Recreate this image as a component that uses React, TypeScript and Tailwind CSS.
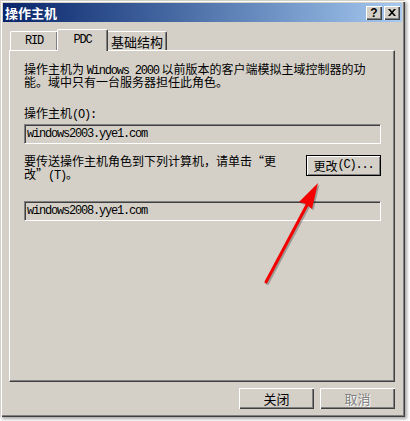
import type { ReactNode } from 'react';

const M = ({ children }: { children: ReactNode }) => (
  <span className="font-['Liberation_Mono',monospace] text-[12px] leading-[13px] tracking-[-1.2px]">{children}</span>
);

const Line = ({ children }: { children: ReactNode }) => (
  <div className="h-[13px] leading-[13px] whitespace-nowrap overflow-visible">{children}</div>
);

function Field({ value }: { value: string }) {
  return (
    <div className="flex items-center w-[357px] h-[20px] pl-[2px] border-t border-l border-[#808080] border-b-white border-r-white border-b border-r shadow-[inset_1px_1px_0_#404040]">
      <M>{value}</M>
    </div>
  );
}

export default function App() {
  return (
    <div className="relative w-[410px] h-[421px] bg-white overflow-hidden font-['Noto_Sans_CJK_SC',sans-serif] text-[12px] leading-[13px] text-black">
      <div className="flex flex-col w-[405px] h-[417px] bg-[#d4d0c8] p-[3px] shadow-[inset_1px_1px_0_#d4d0c8,inset_2px_2px_0_#fff,inset_-1px_-1px_0_#404040,inset_-2px_-2px_0_#808080,2px_2px_3px_rgba(0,0,0,0.35)]">
        {/* title bar */}
        <div className="flex items-center justify-between h-[19px] pl-[2px] pr-[2px] bg-gradient-to-r from-[#0a246a] to-[#a6caf0]">
          <span className="text-white font-bold text-[13px] leading-[19px]">操作主机</span>
          <div className="flex gap-[2px]">
            <div className="flex items-center justify-center w-[16px] h-[14px] bg-[#d4d0c8] shadow-[inset_1px_1px_0_#fff,inset_-1px_-1px_0_#404040,inset_-2px_-2px_0_#808080] font-['Liberation_Sans',sans-serif] font-bold text-[12px] leading-[12px]">
              ?
            </div>
            <div className="flex items-center justify-center w-[16px] h-[14px] bg-[#d4d0c8] shadow-[inset_1px_1px_0_#fff,inset_-1px_-1px_0_#404040,inset_-2px_-2px_0_#808080]">
              <svg width="8" height="7" viewBox="0 0 8 7">
                <path d="M0 0L2 0L4 2.3L6 0L8 0L5 3.5L8 7L6 7L4 4.7L2 7L0 7L3 3.5Z" fill="#000" />
              </svg>
            </div>
          </div>
        </div>

        {/* tabs */}
        <div className="flex items-end h-[21px] mt-[7px] ml-[7px] relative z-10">
          <div className="flex items-center justify-center w-[47px] h-[19px] border-t border-l border-white rounded-tl-[2px] shadow-[inset_-1px_0_0_#808080]">
            <M>RID</M>
          </div>
          <div className="flex items-start justify-center pt-[4px] w-[51px] h-[22px] -mb-[1px] bg-[#d4d0c8] border-t border-l border-white border-r border-r-[#404040] rounded-t-[2px] shadow-[inset_-1px_0_0_#808080]">
            <M>PDC</M>
          </div>
          <div className="flex items-center justify-center w-[59px] h-[19px] border-t border-white border-r border-r-[#404040] rounded-tr-[2px] shadow-[inset_-1px_0_0_#808080] text-[13px]">
            基础结构
          </div>
        </div>

        {/* panel */}
        <div className="flex flex-col w-[386px] h-[332px] ml-[6px] pl-[14px] pt-[11px] border-t border-l border-white border-r border-b border-r-[#404040] border-b-[#404040] shadow-[inset_-1px_-1px_0_#808080]">
          <div>
            <Line>
              操作主机为 <M>Windows 2000</M> 以前版本的客户端模拟主域控制器的功
            </Line>
            <Line>能。域中只有一台服务器担任此角色。</Line>
          </div>
          <div className="mt-[18px]">
            <Line>
              操作主机<M>(O):</M>
            </Line>
          </div>
          <div className="mt-[5px]">
            <Field value="windows2003.yye1.com" />
          </div>
          <div className="flex justify-between w-[357px] mt-[10px]">
            <div>
              <Line>要传送操作主机角色到下列计算机，请单击“更</Line>
              <Line>
                改”<M>(T)</M>。
              </Line>
            </div>
            <button className="flex items-center justify-center w-[75px] h-[21px] mt-[1px] bg-[#d4d0c8] border border-black shadow-[inset_1px_1px_0_#fff,inset_-1px_-1px_0_#808080]">
              更改<M>(C)...</M>
            </button>
          </div>
          <div className="mt-[21px]">
            <Field value="windows2008.yye1.com" />
          </div>
        </div>

        {/* bottom buttons */}
        <div className="flex justify-end gap-[6px] w-[386px] ml-[6px] mt-[6px]">
          <button className="flex items-center justify-center w-[75px] h-[21px] bg-[#d4d0c8] shadow-[inset_1px_1px_0_#fff,inset_-1px_-1px_0_#404040,inset_-2px_-2px_0_#808080] text-[13px]">
            关闭
          </button>
          <button className="flex items-center justify-center w-[75px] h-[21px] bg-[#d4d0c8] shadow-[inset_1px_1px_0_#fff,inset_-1px_-1px_0_#404040,inset_-2px_-2px_0_#808080] text-[13px] text-[#808080] [text-shadow:1px_1px_0_#fff]">
            取消
          </button>
        </div>
      </div>

      {/* red arrow annotation */}
      <svg className="absolute left-0 top-0 pointer-events-none" width="410" height="421">
        <g opacity="0.25" transform="translate(1.5 1.5)">
          <line x1="266" y1="282" x2="307" y2="205" stroke="#000" strokeWidth="3" strokeLinecap="round" />
          <polygon points="318,183 312,209 306,204 299,202" fill="#000" />
        </g>
        <line x1="266" y1="282" x2="307" y2="205" stroke="#f40000" strokeWidth="3" strokeLinecap="round" />
        <polygon points="318,183 312,209 306,204 299,202" fill="#f40000" />
      </svg>
    </div>
  );
}
